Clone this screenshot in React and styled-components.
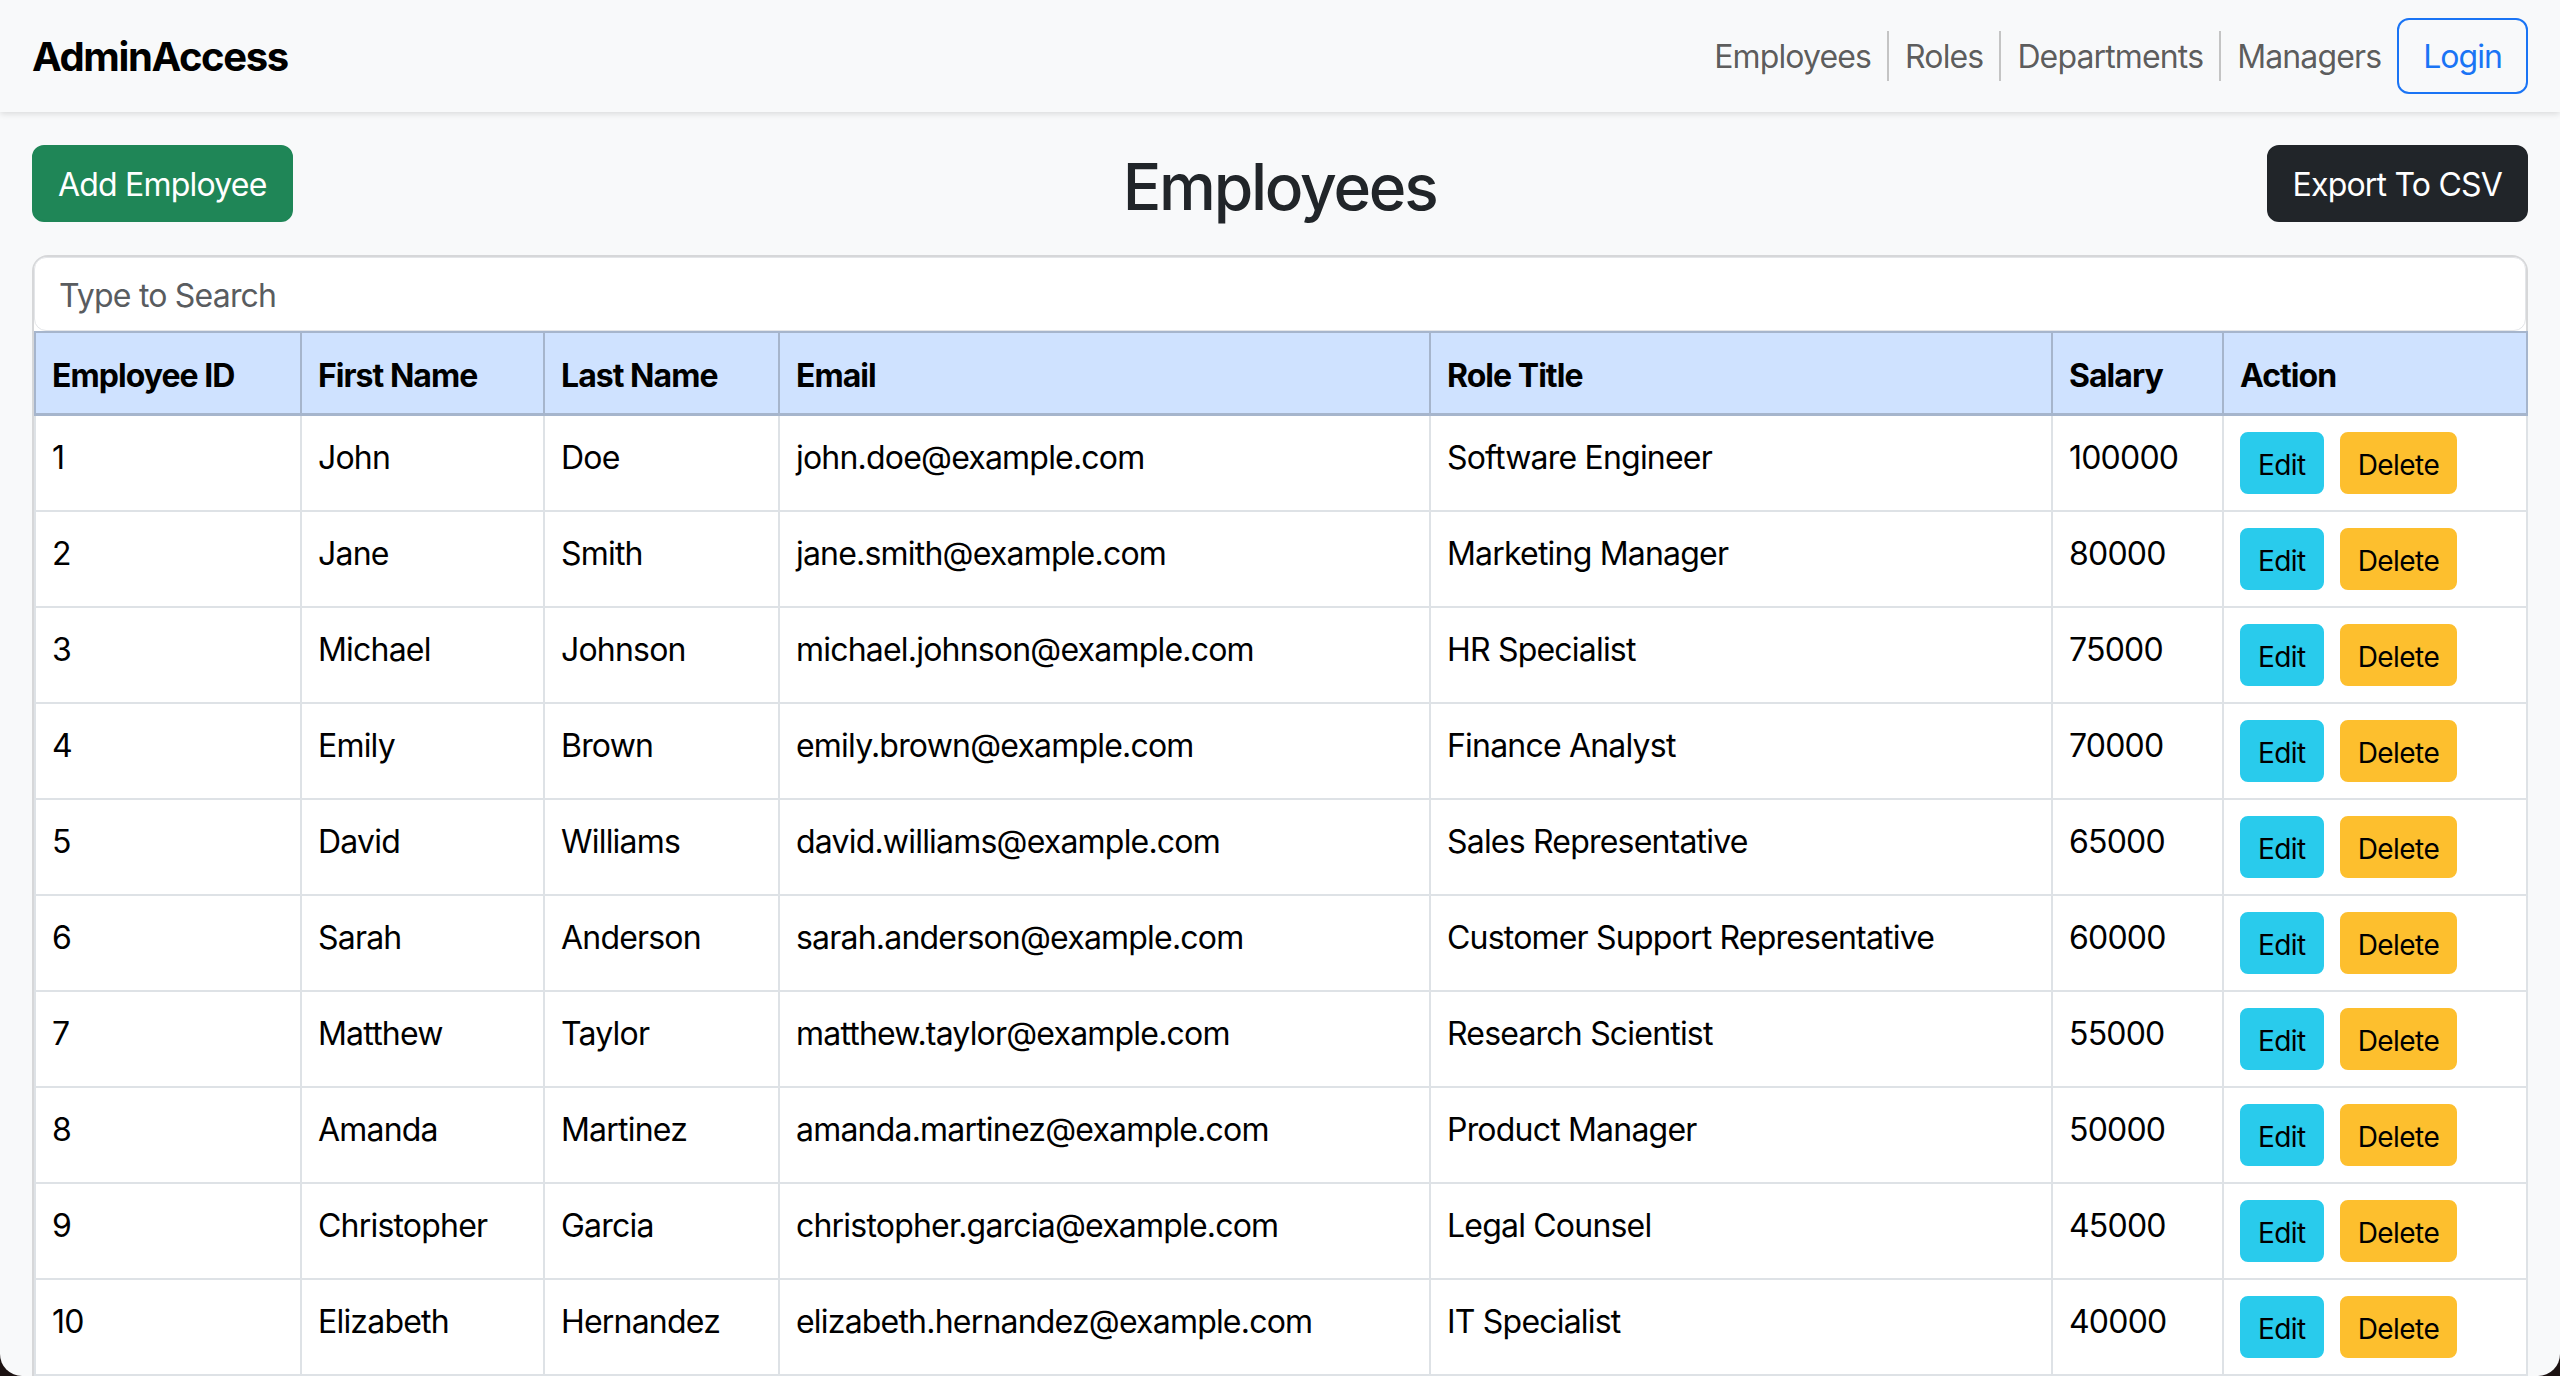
import React from "react";
import styled, { createGlobalStyle } from "styled-components";

const GlobalStyle = createGlobalStyle`
  html, body { margin: 0; padding: 0; }
  body {
    background: #f8f9fa;
    font-family: Inter, "Noto Sans", "Liberation Sans", sans-serif;
    color: #212529;
    -webkit-font-smoothing: antialiased;
  }
  * { box-sizing: border-box; }
`;

const NavBar = styled.nav`
  height: 112px;
  padding: 0 32px;
  display: flex;
  align-items: center;
  justify-content: space-between;
  background: #f8f9fa;
  box-shadow: 0 2px 6px rgba(0, 0, 0, 0.12);
  position: relative;
  z-index: 1;
`;

const Brand = styled.div`
  font-size: 40px;
  font-weight: 700;
  color: #000;
  letter-spacing: -0.035em;
  line-height: 60px;
  padding-top: 2px;
`;

const NavLinks = styled.div`
  display: flex;
  align-items: center;
`;

const NavLink = styled.a`
  font-size: 32px;
  line-height: 48px;
  padding: 0 16px;
  color: rgba(0, 0, 0, 0.65);
  text-decoration: none;
  letter-spacing: -0.027em;
  border-right: ${(p) => (p.$sep ? "2px solid #c4c4c4" : "none")};
`;

const NavLabel = styled.span`
  display: inline-block;
  padding-top: 3px;
  line-height: 45px;
`;

const OutlineButton = styled.button`
  font-family: inherit;
  font-size: 32px;
  line-height: 48px;
  padding: 13px 24px 11px;
  border: 2px solid #1a74f5;
  border-radius: 12px;
  background: transparent;
  color: #1a74f5;
  letter-spacing: -0.03em;
`;

const Main = styled.main`
  padding: 33px 32px 0;
`;

const Toolbar = styled.div`
  display: flex;
  align-items: center;
  justify-content: space-between;
`;

const SolidButton = styled.button`
  font-family: inherit;
  font-size: 32px;
  line-height: 48px;
  padding: 14px 24px 11px;
  border: 2px solid ${(p) => p.$bg};
  border-radius: 12px;
  background: ${(p) => p.$bg};
  color: #fff;
  letter-spacing: -0.025em;
`;

const Title = styled.h2`
  margin: 0;
  padding-top: 6px;
  font-size: 64px;
  font-weight: 500;
  line-height: 70px;
  color: #212529;
  letter-spacing: -0.035em;
`;

const Panel = styled.section`
  margin-top: 33px;
  border: 2px solid #d6d7d9;
  border-bottom: none;
  border-radius: 16px 16px 0 0;
  background: #fff;
`;

const SearchInput = styled.input`
  display: block;
  width: 100%;
  font-family: inherit;
  font-size: 32px;
  line-height: 48px;
  padding: 14px 24px 10px;
  border: 1px solid #e3e5e8;
  border-radius: 12px;
  color: #212529;
  background: #fff;
  outline: none;
  letter-spacing: -0.025em;
  &::placeholder { color: #595c5f; }
`;

const Table = styled.table`
  width: 100%;
  border-collapse: collapse;
  table-layout: fixed;
  vertical-align: top;
`;

const Col = styled.col`
  width: ${(p) => p.$w}px;
`;

const HeadCell = styled.th`
  background: #cfe2ff;
  border: 2px solid #a6b5cc;
  border-bottom-width: 3px;
  padding: 19px 16px 13px;
  font-size: 32px;
  line-height: 48px;
  font-weight: 700;
  text-align: left;
  color: #000;
  vertical-align: bottom;
  letter-spacing: -0.03em;
`;

const Cell = styled.td`
  background: #fff;
  border: 2px solid #dee2e6;
  padding: ${(p) => (p.$action ? "16px" : "11px 16px 21px")};
  font-size: 32px;
  line-height: 48px;
  color: #000;
  white-space: nowrap;
  letter-spacing: -0.025em;
`;

const Actions = styled.div`
  display: flex;
  gap: 16px;
`;

const SmallButton = styled.button`
  font-family: inherit;
  font-size: 28px;
  line-height: 42px;
  padding: 10px 16px 6px;
  border: 2px solid ${(p) => p.$bg};
  border-radius: 8px;
  background: ${(p) => p.$bg};
  color: #000;
  letter-spacing: -0.02em;
`;

const WindowCorner = styled.div`
  position: fixed;
  bottom: 0;
  ${(p) => (p.$side === "left" ? "left: 0;" : "right: 0;")}
  width: 22px;
  height: 22px;
  overflow: hidden;
  z-index: 10;
  &::after {
    content: "";
    position: absolute;
    width: 44px;
    height: 44px;
    bottom: 0;
    ${(p) => (p.$side === "left" ? "left: 0;" : "right: 0;")}
    border-radius: 22px;
    box-shadow: 0 0 0 30px #1c1212;
  }
`;

const columns = [
  ["Employee ID", 266],
  ["First Name", 243],
  ["Last Name", 235],
  ["Email", 651],
  ["Role Title", 622],
  ["Salary", 171],
  ["Action", 304],
];

const employees = [
  [1, "John", "Doe", "john.doe@example.com", "Software Engineer", 100000],
  [2, "Jane", "Smith", "jane.smith@example.com", "Marketing Manager", 80000],
  [3, "Michael", "Johnson", "michael.johnson@example.com", "HR Specialist", 75000],
  [4, "Emily", "Brown", "emily.brown@example.com", "Finance Analyst", 70000],
  [5, "David", "Williams", "david.williams@example.com", "Sales Representative", 65000],
  [6, "Sarah", "Anderson", "sarah.anderson@example.com", "Customer Support Representative", 60000],
  [7, "Matthew", "Taylor", "matthew.taylor@example.com", "Research Scientist", 55000],
  [8, "Amanda", "Martinez", "amanda.martinez@example.com", "Product Manager", 50000],
  [9, "Christopher", "Garcia", "christopher.garcia@example.com", "Legal Counsel", 45000],
  [10, "Elizabeth", "Hernandez", "elizabeth.hernandez@example.com", "IT Specialist", 40000],
];

const navItems = ["Employees", "Roles", "Departments", "Managers"];

export default function App() {
  return (
    <>
      <GlobalStyle />
      <NavBar>
        <Brand>AdminAccess</Brand>
        <NavLinks>
          {navItems.map((n, i) => (
            <NavLink key={n} href="#" $sep={i < navItems.length - 1}>
              <NavLabel>{n}</NavLabel>
            </NavLink>
          ))}
          <OutlineButton>Login</OutlineButton>
        </NavLinks>
      </NavBar>
      <Main>
        <Toolbar>
          <SolidButton $bg="#1f8657">Add Employee</SolidButton>
          <Title>Employees</Title>
          <SolidButton $bg="#212529">Export To CSV</SolidButton>
        </Toolbar>
        <Panel>
          <SearchInput placeholder="Type to Search" />
          <Table>
            <colgroup>
              {columns.map(([c, w]) => (
                <Col key={c} $w={w} />
              ))}
            </colgroup>
            <thead>
              <tr>
                {columns.map(([c]) => (
                  <HeadCell key={c}>{c}</HeadCell>
                ))}
              </tr>
            </thead>
            <tbody>
              {employees.map((e) => (
                <tr key={e[0]}>
                  {e.map((v, i) => (
                    <Cell key={i}>{v}</Cell>
                  ))}
                  <Cell $action>
                    <Actions>
                      <SmallButton $bg="#29cbec">Edit</SmallButton>
                      <SmallButton $bg="#fdbf2e">Delete</SmallButton>
                    </Actions>
                  </Cell>
                </tr>
              ))}
            </tbody>
          </Table>
        </Panel>
      </Main>
      <WindowCorner $side="left" />
      <WindowCorner $side="right" />
    </>
  );
}
